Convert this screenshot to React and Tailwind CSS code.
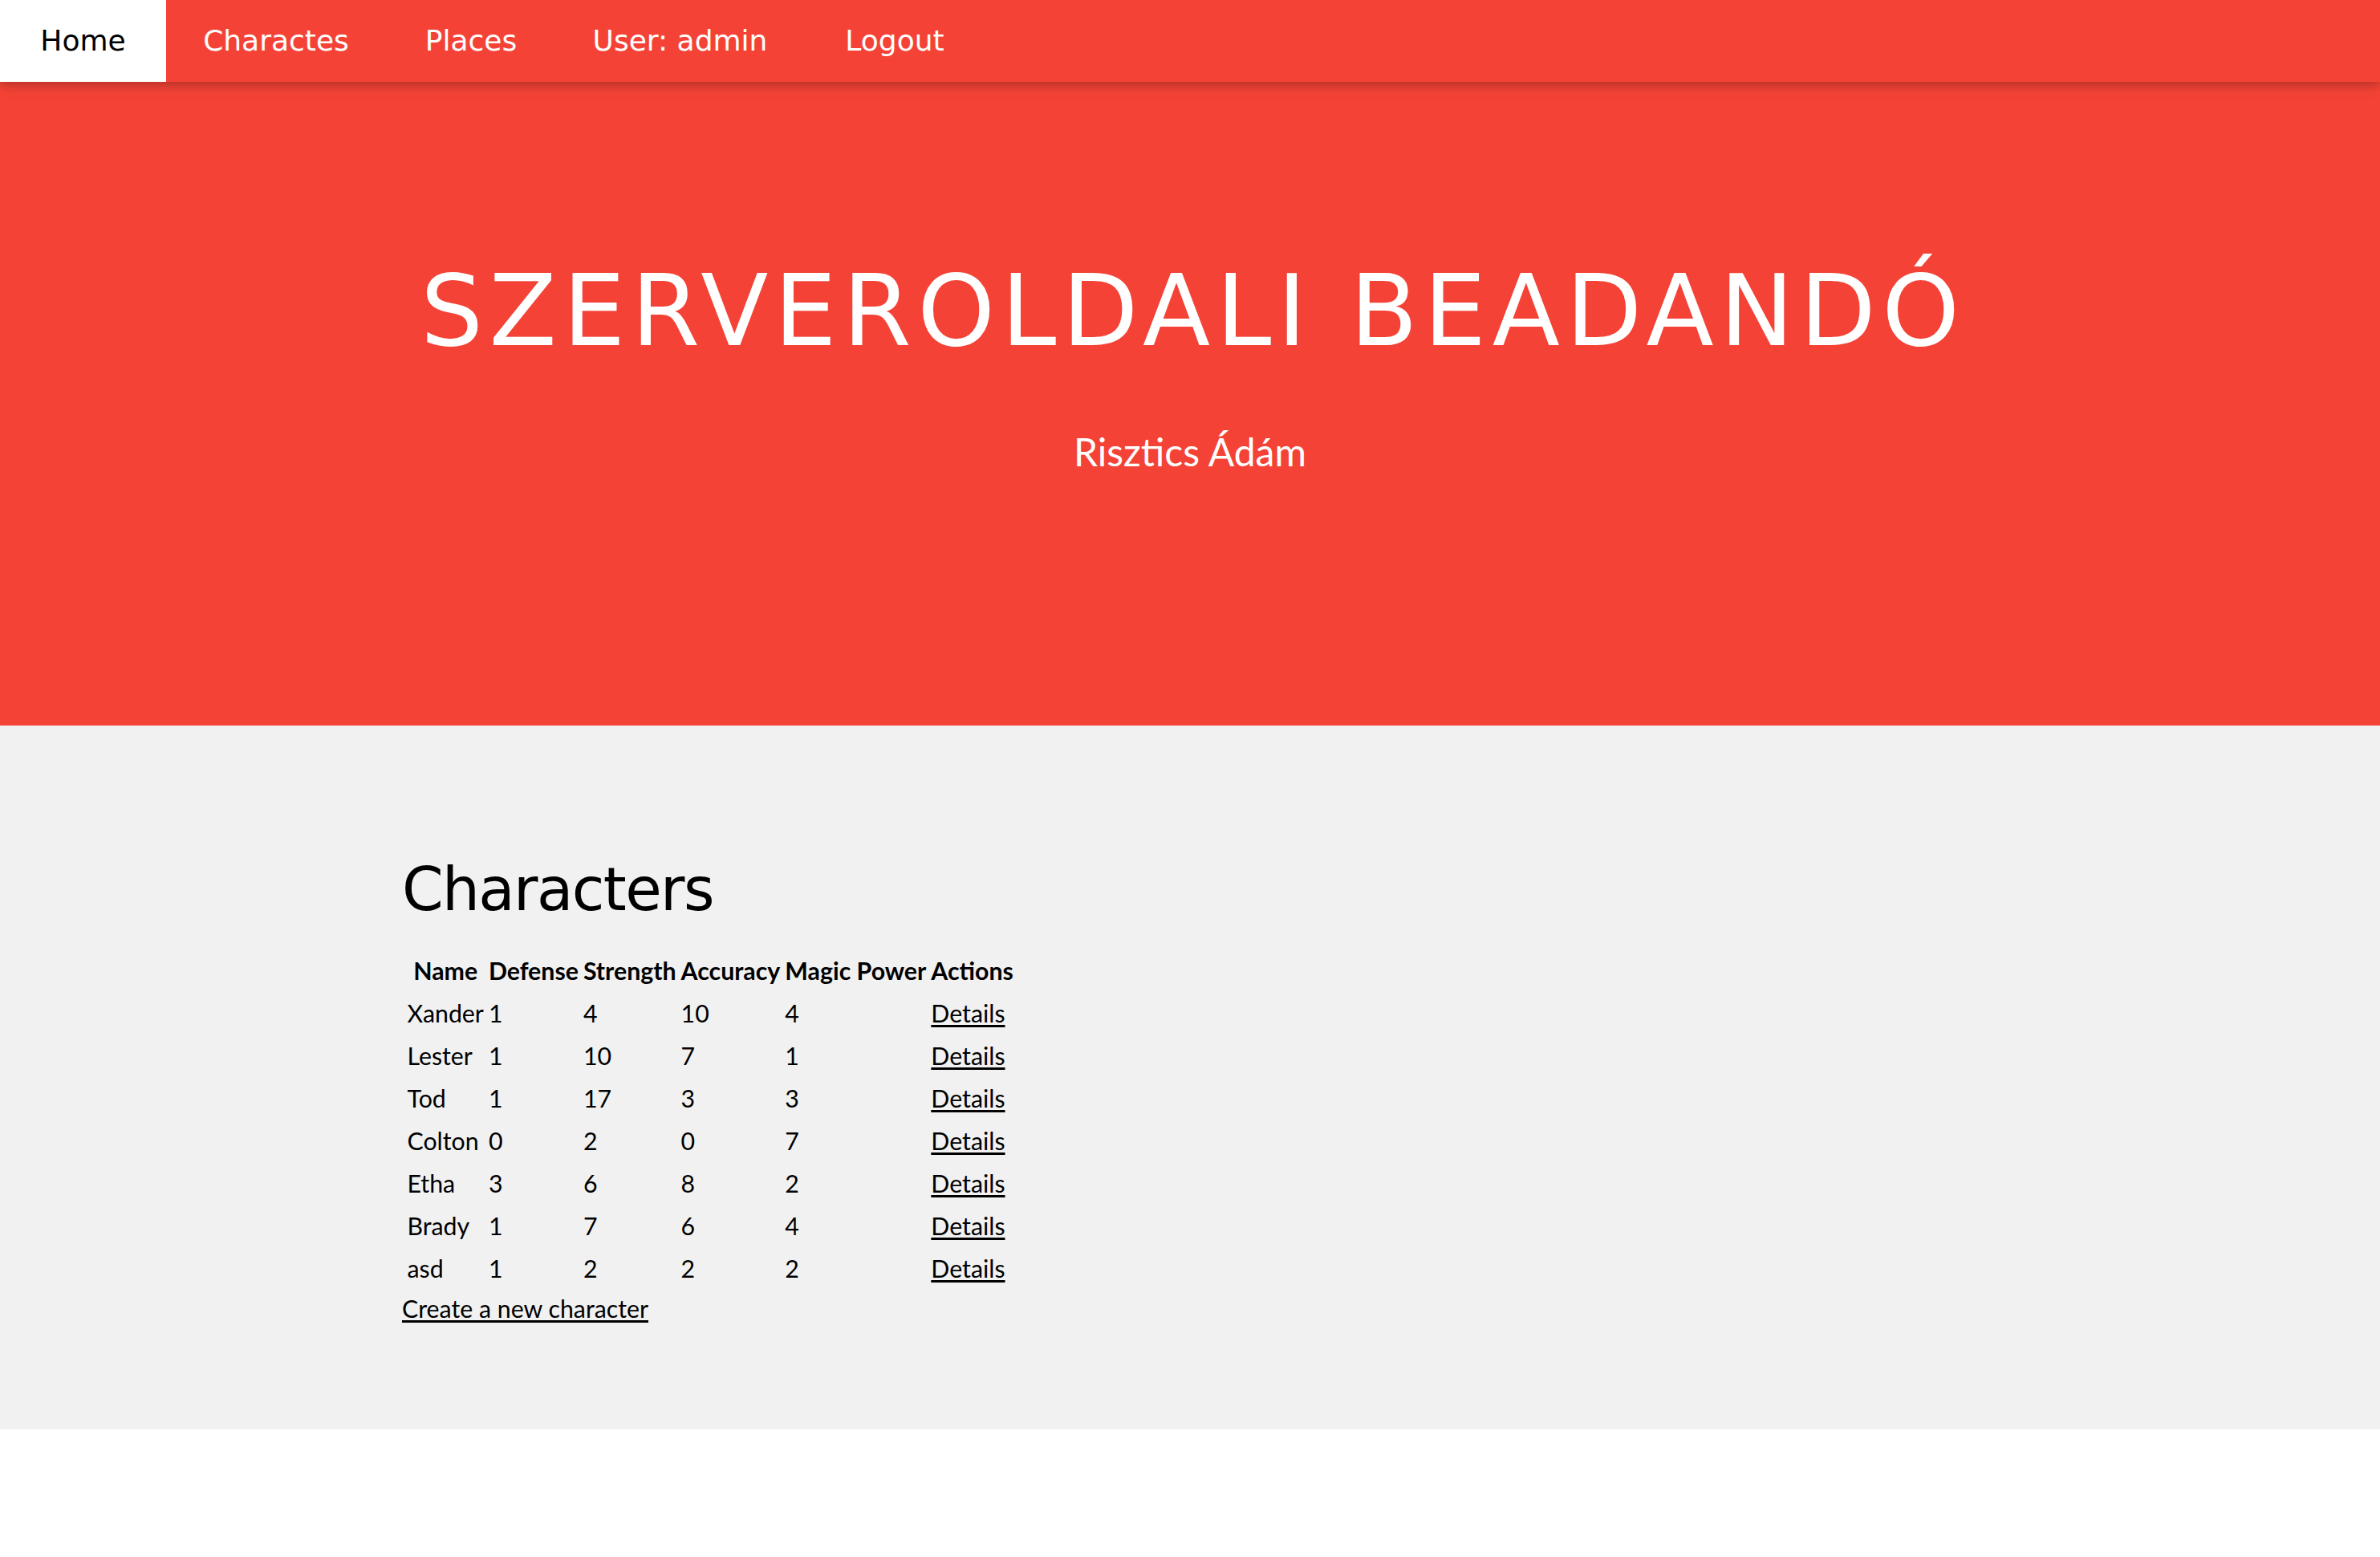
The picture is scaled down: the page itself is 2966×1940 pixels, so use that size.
import React from "react";

const rows = [
  ["Xander", 1, 4, 10, 4],
  ["Lester", 1, 10, 7, 1],
  ["Tod", 1, 17, 3, 3],
  ["Colton", 0, 2, 0, 7],
  ["Etha", 3, 6, 8, 2],
  ["Brady", 1, 7, 6, 4],
  ["asd", 1, 2, 2, 2],
];

export default function App() {
  return (
    <div className="min-h-[1940px] bg-white font-['Lato',sans-serif] text-black">
      {/* Navbar */}
      <nav className="relative z-10 flex h-[102px] w-full bg-[#f44336] font-['DejaVu_Sans',sans-serif] text-[36px] leading-none text-white shadow-[0_4px_10px_0_rgba(0,0,0,0.16),0_4px_19px_0_rgba(0,0,0,0.12)]">
        <a className="flex w-[207px] items-center justify-center bg-white text-black">Home</a>
        <a className="flex w-[274px] items-center justify-center">Charactes</a>
        <a className="flex w-[212px] items-center justify-center">Places</a>
        <a className="flex w-[309px] items-center justify-center">User: admin</a>
        <a className="flex w-[226px] items-center justify-center">Logout</a>
      </nav>

      {/* Header */}
      <header className="flex h-[802px] flex-col items-center bg-[#f44336] pt-[224px] text-white">
        <h1 className="pl-[7.6px] font-['DejaVu_Sans',sans-serif] text-[123px] font-normal leading-none tracking-[7.6px]">
          SZERVEROLDALI BEADANDÓ
        </h1>
        <p className="mt-[90px] font-['Lato',sans-serif] text-[48px] leading-none">Risztics Ádám</p>
      </header>

      {/* Content */}
      <section className="bg-[#f1f1f1] pb-[128px] pl-[501px] pt-[167px]">
        <h2 className="mb-[36px] font-['DejaVu_Sans',sans-serif] text-[74px] leading-none tracking-[-1.6px]">
          Characters
        </h2>
        <table className="ml-[2px] border-separate border-spacing-[3px] text-[30.3px] leading-[47px]">
          <thead>
            <tr>
              {["Name", "Defense", "Strength", "Accuracy", "Magic Power", "Actions"].map((h) => (
                <th key={h} className="p-[1.5px] text-center font-bold">
                  {h}
                </th>
              ))}
            </tr>
          </thead>
          <tbody>
            {rows.map((r) => (
              <tr key={r[0]}>
                {r.map((c, i) => (
                  <td key={i} className="p-[1.5px] text-left">
                    {c}
                  </td>
                ))}
                <td className="p-[1.5px] text-left">
                  <a className="underline decoration-[3px] underline-offset-[3px]">Details</a>
                </td>
              </tr>
            ))}
          </tbody>
        </table>
        <a className="block w-fit text-[30.3px] leading-[45px] underline decoration-[3px] underline-offset-[3px]">
          Create a new character
        </a>
      </section>
    </div>
  );
}
